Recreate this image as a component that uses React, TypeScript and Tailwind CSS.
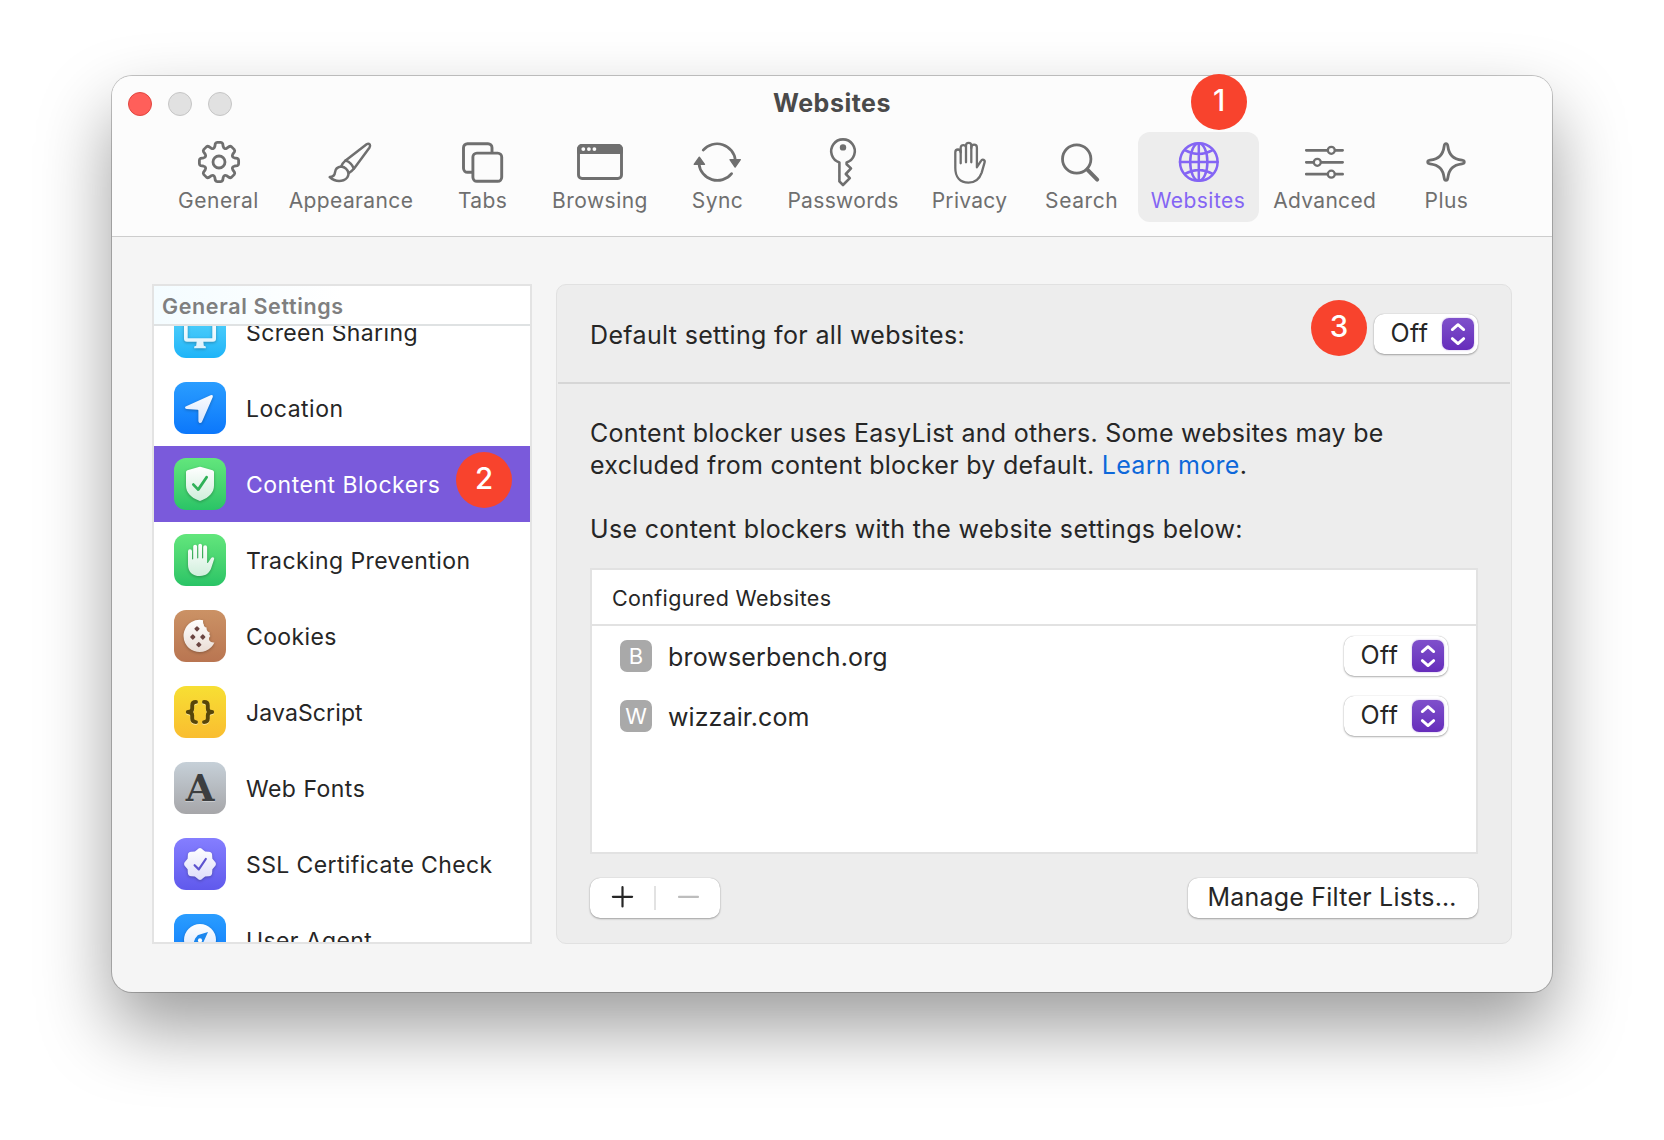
import React, { ReactNode } from "react";

const gearPath = (() => {
  const p = (a: number, r: number) =>
    `${(24 + r * Math.sin(a)).toFixed(2)} ${(24 - r * Math.cos(a)).toFixed(2)}`;
  let d = "";
  for (let i = 0; i < 8; i++) {
    const a = (i * Math.PI) / 4;
    d += `${i ? "L" : "M"}${p(a - 0.27, 15.9)}L${p(a - 0.2, 18.6)}Q${p(a - 0.17, 19.7)} ${p(a - 0.09, 19.7)}L${p(a + 0.09, 19.7)}Q${p(a + 0.17, 19.7)} ${p(a + 0.2, 18.6)}L${p(a + 0.27, 15.9)}Q${p(a + Math.PI / 8, 13.4)} ${p(a + Math.PI / 4 - 0.27, 15.9)}`;
  }
  return d + "Z";
})();

const sealPath = (() => {
  const p = (a: number, r: number) =>
    `${(26 + r * Math.sin(a)).toFixed(2)} ${(26 - r * Math.cos(a)).toFixed(2)}`;
  let d = `M${p(-Math.PI / 8, 13.4)}`;
  for (let i = 0; i < 8; i++) {
    const a = (i * Math.PI) / 4;
    d += `L${p(a - 0.2, 14.6)}Q${p(a, 17.6)} ${p(a + 0.2, 14.6)}L${p(a + Math.PI / 8, 13.4)}`;
  }
  return d + "Z";
})();

function Glyph({ children, w = 2.8, box = "0 0 48 48" }: { children: ReactNode; w?: number; box?: string }) {
  return (
    <svg
      className="block size-12 overflow-visible"
      viewBox={box}
      fill="none"
      stroke="currentColor"
      strokeWidth={w}
      strokeLinecap="round"
      strokeLinejoin="round"
    >
      {children}
    </svg>
  );
}

const tools: { label: string; box: string; ls: string; icon: ReactNode }[] = [
  {
    label: "General",
    box: "w-[107px]",
    ls: "tracking-[0.5px]",
    icon: (
      <Glyph>
        <path d={gearPath} />
        <circle cx="24" cy="24" r="6" />
      </Glyph>
    ),
  },
  {
    label: "Appearance",
    box: "w-[154px]",
    ls: "tracking-[0.38px]",
    icon: (
      <Glyph w={2.5}>
        <path d="M18.6 22.4 L39.6 6.3 Q41.5 5 42.8 6.5 Q43.6 8 42.4 9.8 L27.3 30.2 Q25 33 21.6 35.3" />
        <path d="M18.6 22.4 Q15.5 25 14.2 28.6" />
        <path d="M18.8 22.6 Q24.6 24.5 26.8 30.6" />
        <path d="M14.2 28.6 Q20 29.5 21.6 35.3 Q21.3 40.6 16.5 42.3 Q9 44.8 2.7 39 Q7.6 38.6 8 34.3 Q8.6 29.2 14.2 28.6 Z" />
      </Glyph>
    ),
  },
  {
    label: "Tabs",
    box: "w-[105px]",
    ls: "tracking-[0.34px]",
    icon: (
      <Glyph w={2.9} box="0.7 0 48 48">
        <rect x="14.6" y="15.1" width="28.8" height="28.2" rx="4" />
        <path d="M13.5 34.3H9.2a4 4 0 0 1-4-4V9.7a4 4 0 0 1 4-4h20.5a4 4 0 0 1 4 4v4" />
      </Glyph>
    ),
  },
  {
    label: "Browsing",
    box: "w-[126px]",
    ls: "tracking-[0.47px]",
    icon: (
      <Glyph w={2.9}>
        <rect x="2.5" y="7.5" width="43" height="33" rx="3.6" />
        <path d="M2.5 14.6V11a3.5 3.5 0 0 1 3.5-3.5h36a3.5 3.5 0 0 1 3.5 3.5v3.6Z" fill="currentColor" />
        <g fill="#fcfcfc" stroke="none">
          <circle cx="7.3" cy="11.1" r="1.9" />
          <circle cx="12.9" cy="11.1" r="1.9" />
          <circle cx="18.4" cy="11.1" r="1.9" />
        </g>
      </Glyph>
    ),
  },
  {
    label: "Sync",
    box: "w-[105px]",
    ls: "tracking-[0.5px]",
    icon: (
      <Glyph w={2.7} box="0.6 0 48 48">
        <path d="M9.8 12.1A18.4 18.4 0 0 1 42 22.5" />
        <path d="M5.6 25.8A18.4 18.4 0 0 0 38.2 35.6" />
        <path d="M36.6 21.7H46.9L41.7 29Z M0.8 26.3H11.1L5.9 19.2Z" fill="currentColor" strokeWidth="1.4" />
      </Glyph>
    ),
  },
  {
    label: "Passwords",
    box: "w-[142px]",
    ls: "tracking-[0.33px]",
    icon: (
      <Glyph w={2.6}>
        <path d="M20.4 24.4A11.8 11.8 0 1 1 27.6 24.4V26.2L32 30.4L26.8 36L30.8 40.2L24 47L20.4 43.4Z" />
        <circle cx="24" cy="9.4" r="3.2" fill="currentColor" stroke="none" />
      </Glyph>
    ),
  },
  {
    label: "Privacy",
    box: "w-[108px]",
    ls: "tracking-[0.3px] pr-[1px]",
    icon: (
      <Glyph w={2.3}>
        <path d="M14.7 25.3V14.2a2.7 2.7 0 0 0-5.4 0V30C9.3 39 14 44.6 22.5 44.6C30 44.6 33.6 40.6 35.7 34.6L38.6 24.4C39.3 22 36.4 20.5 35 22.8L30.9 29.2V9.4a2.8 2.8 0 0 0-5.6 0V24.3" />
        <path d="M14.7 14.5V9.4a2.7 2.7 0 0 1 5.3 0V24.3M20 9.5V7.6a2.65 2.65 0 0 1 5.3 0V10" />
      </Glyph>
    ),
  },
  {
    label: "Search",
    box: "w-[110px]",
    ls: "tracking-[0.6px] pl-[1.5px]",
    icon: (
      <Glyph w={2.8}>
        <circle cx="19.7" cy="21" r="14.2" />
        <path d="M30.4 31.6L40.2 41.6" strokeWidth="4" />
      </Glyph>
    ),
  },
  {
    label: "Websites",
    box: "w-[121px]",
    ls: "tracking-[0.46px] pr-[1px]",
    icon: (
      <Glyph w={2.5} box="0.7 0 48 48">
        <circle cx="24.5" cy="24" r="18.8" />
        <ellipse cx="24.5" cy="24" rx="8.6" ry="18.8" />
        <path d="M5.7 24H43.3M24.5 5.2V42.8M10.6 12.2Q24.5 20 38.4 12.2M10.6 35.8Q24.5 28 38.4 35.8" />
      </Glyph>
    ),
  },
  {
    label: "Advanced",
    box: "w-[128px]",
    ls: "tracking-[0.3px] pr-[0.6px]",
    icon: (
      <Glyph w={2.8} box="0.4 0 48 48">
        <path d="M5.7 12.3H42M5.7 24.3H42M5.7 36.2H42" />
        <g fill="#fcfcfc" strokeWidth="2.3">
          <circle cx="30.7" cy="12.3" r="3.5" />
          <circle cx="16.7" cy="24.3" r="3.5" />
          <circle cx="30.7" cy="36.2" r="3.5" />
        </g>
      </Glyph>
    ),
  },
  {
    label: "Plus",
    box: "w-[111px]",
    ls: "tracking-[0.45px]",
    icon: (
      <Glyph w={2.8} box="0.5 0 48 48">
        <path
          transform="translate(23.5 24)"
          d="M0-18.3C1.2-18.3 1.6-17.4 1.8-16C3-7 7-3 16-1.8C17.4-1.6 18.3-1.2 18.3 0S17.4 1.6 16 1.8C7 3 3 7 1.8 16C1.6 17.4 1.2 18.3 0 18.3S-1.6 17.4-1.8 16C-3 7-7 3-16 1.8C-17.4 1.6-18.3 1.2-18.3 0S-17.4-1.6-16-1.8C-7-3-3-7-1.8-16C-1.6-17.4-1.2-18.3 0-18.3Z"
        />
      </Glyph>
    ),
  },
];

function Badge({ n, className }: { n: number; className: string }) {
  return (
    <span
      className={`absolute z-10 flex size-14 items-center justify-center rounded-full bg-[#f8432d] pb-[2px] text-[29.5px] font-medium leading-none text-white ${className}`}
    >
      {n}
    </span>
  );
}

function Tile({ id, from, to, bg, children }: { id: string; from: string; to: string; bg: string; children: ReactNode }) {
  return (
    <span className={`flex size-[52px] shrink-0 overflow-hidden rounded-[12px] bg-linear-to-b ${bg}`}>
      <svg className="block size-[52px] drop-shadow-[0_1px_1.5px_rgba(0,0,0,0.28)]" viewBox="0 0 52 52" fill={`url(#${id})`}>
        <defs>
          <linearGradient id={id} gradientUnits="userSpaceOnUse" x1="0" y1="9" x2="0" y2="43">
            <stop offset="0" stopColor={from} />
            <stop offset="1" stopColor={to} />
          </linearGradient>
        </defs>
        {children}
      </svg>
    </span>
  );
}

const rows: { label: string; ls: string; selected?: boolean; icon: ReactNode }[] = [
  {
    label: "Screen Sharing",
    ls: "tracking-[0.38px]",
    icon: (
      <Tile id="g-screen" from="#ffffff" to="#dcf2fc" bg="from-[#5ad8fb] to-[#1cb4f8]">
        <path fillRule="evenodd" d="M13 11H39a3 3 0 0 1 3 3V32.7a3 3 0 0 1-3 3H13a3 3 0 0 1-3-3V14a3 3 0 0 1 3-3ZM13.7 14.6V32.2H38.3V14.6Z" />
        <path d="M22.7 35H29.3L29.8 39.8L31.8 40.6V42.3H20.2V40.6L22.2 39.8Z" />
      </Tile>
    ),
  },
  {
    label: "Location",
    ls: "tracking-[0.5px]",
    icon: (
      <Tile id="g-loc" from="#ffffff" to="#d3e3fd" bg="from-[#2a9dff] to-[#0c77fb]">
        <path d="M36.6 13.2Q39.4 12.4 38.7 15.2L27.9 40Q26.9 41.7 25.2 40.8Q24.5 40.2 24.4 39V28.6Q24.4 27.9 23.6 27.8L12.6 27.1Q11 26.8 11 25.6Q11 24.7 12.2 24.2Z" />
      </Tile>
    ),
  },
  {
    label: "Content Blockers",
    ls: "tracking-[0.5px]",
    selected: true,
    icon: (
      <Tile id="g-shield" from="#ffffff" to="#cfeedb" bg="from-[#62e67c] to-[#29c466]">
        <path d="M24.8 9Q26 8.4 27.2 9L38.6 12.2Q40 12.7 40 14V27.5C40 34.5 35 39.5 27.2 42.6Q26 43.2 24.8 42.6C17 39.5 12 34.5 12 27.5V14Q12 12.7 13.4 12.2Z" />
        <path d="M19.4 26.6L24.2 31.6L32.6 19.2" fill="none" stroke="#2fb158" strokeWidth="2.8" strokeLinecap="round" strokeLinejoin="round" />
      </Tile>
    ),
  },
  {
    label: "Tracking Prevention",
    ls: "tracking-[0.42px]",
    icon: (
      <Tile id="g-hand" from="#ffffff" to="#cfeedb" bg="from-[#62e67c] to-[#29c466]">
        <path d="M14 17.2a2 2 0 0 1 4 0V24.8a.6.6 0 0 0 1.2 0V12.6a1.95 1.95 0 0 1 3.9 0V23.8a.6.6 0 0 0 1.2 0V11.6a1.85 1.85 0 0 1 3.7 0V23.8a.6.6 0 0 0 1.2 0V13.2a1.95 1.95 0 0 1 3.9 0V28.6Q33.4 29.6 34.2 28.6L37 24.2Q38.2 22.6 39.6 23.4Q40.6 24 40 25.6L37.4 33.6C35.6 39 32 42 26 42C18 42 14 37.4 14 30.4Z" />
      </Tile>
    ),
  },
  {
    label: "Cookies",
    ls: "tracking-[0.38px]",
    icon: (
      <Tile id="g-cookie" from="#ffffff" to="#e9dcd4" bg="from-[#cb9265] to-[#b97551]">
        <path d="M29.2 10.2A16.1 16.1 0 1 0 40.4 32.4Q36.8 32.8 35.4 30.4Q34.2 28 36.4 26Q34.4 24.6 36 22.8Q32.2 21.4 32.6 17.6Q29.8 17 29.8 14.4Q28.6 12.4 29.2 10.2Z" />
        <g fill="#6b4542" stroke="#6b4542" strokeWidth="1.4" strokeLinejoin="round">
          <path d="M23 16.9l1.9 1.9l-1.9 1.9l-1.9-1.9z" />
          <path d="M18.8 25.1l1.9 1.9l-1.9 1.9l-1.9-1.9z" />
          <path d="M28.8 25.1l1.9 1.9l-1.9 1.9l-1.9-1.9z" />
          <path d="M24.8 32.8l1.9 1.9l-1.9 1.9l-1.9-1.9z" />
        </g>
      </Tile>
    ),
  },
  {
    label: "JavaScript",
    ls: "tracking-[0.12px]",
    icon: (
      <span className="flex size-[52px] shrink-0 rounded-[12px] bg-linear-to-b from-[#f7df33] to-[#f9bd30]">
        <svg className="block size-[52px] drop-shadow-[0_1px_0_rgba(255,255,255,0.5)]" viewBox="0 0 52 52" fill="none" stroke="#584609" strokeWidth="3.9" strokeLinecap="round" strokeLinejoin="round">
          <path d="M22 15.9Q18.2 15.9 18.2 19.4V22.4Q18.2 26 13.8 26Q18.2 26 18.2 29.6V32.6Q18.2 36.1 22 36.1" />
          <path d="M30 15.9Q33.8 15.9 33.8 19.4V22.4Q33.8 26 38.2 26Q33.8 26 33.8 29.6V32.6Q33.8 36.1 30 36.1" />
        </svg>
      </span>
    ),
  },
  {
    label: "Web Fonts",
    ls: "tracking-[0.48px]",
    icon: (
      <span className="flex size-[52px] shrink-0 items-center justify-center rounded-[12px] bg-linear-to-b from-[#c6d0d8] to-[#a6a6a9] font-['DejaVu_Serif'] text-[37px] leading-none font-bold text-[#3c3e40] [text-shadow:0_1px_0_rgba(255,255,255,0.35)]">
        A
      </span>
    ),
  },
  {
    label: "SSL Certificate Check",
    ls: "tracking-[0.39px]",
    icon: (
      <Tile id="g-ssl" from="#ffffff" to="#dddcfa" bg="from-[#857eff] to-[#6059ec]">
        <path d={sealPath} />
        <path d="M20.6 27.2L24.8 31.4L31.8 21" fill="none" stroke="#5d53cf" strokeWidth="2.2" strokeLinecap="round" strokeLinejoin="round" />
      </Tile>
    ),
  },
  {
    label: "User Agent",
    ls: "tracking-[0.38px]",
    icon: (
      <Tile id="g-ua" from="#ffffff" to="#d3e3fd" bg="from-[#2a9dff] to-[#0c77fb]">
        <circle cx="26" cy="26" r="16" />
        <path d="M34 18L28.8 29.4Q28.2 31 26.6 31.8L18 34L20.4 26.4Q21 24 22.8 22.4Q23.6 21.2 25 20.8Z" fill="#1a86ee" />
        <circle cx="26" cy="26.4" r="2.1" fill="#ffffff" />
      </Tile>
    ),
  },
];

function Select() {
  return (
    <div className="flex h-10 w-[104px] shrink-0 items-center justify-between rounded-[10px] bg-white pr-1 pl-[16.5px] shadow-[0_0_1px_rgba(0,0,0,0.3),0_1px_2px_rgba(0,0,0,0.3)]">
      <span className="pb-[2px] tracking-[0.4px]">Off</span>
      <svg
        className="block size-8 rounded-[7px] bg-linear-to-b from-[#7f50cb] to-[#662cbb] shadow-[0_0_2px_rgba(102,44,187,0.45)]"
        viewBox="0 0 32 32"
        fill="none"
        stroke="#fff"
        strokeWidth="2.8"
        strokeLinecap="round"
        strokeLinejoin="round"
      >
        <path d="M10.3 11.6L16 6.6L21.7 11.6M10.3 20.6L16 25.6L21.7 20.6" />
      </svg>
    </div>
  );
}

function Site({ letter, name, ls }: { letter: string; name: string; ls: string }) {
  return (
    <div className="flex h-[60px] items-center pr-7 pl-7">
      <span className="flex size-8 items-center justify-center rounded-[7px] bg-[#a9a9a9] text-[22px] leading-none text-white">
        {letter}
      </span>
      <span className={`flex-1 pt-[2px] pl-4 ${ls}`}>{name}</span>
      <Select />
    </div>
  );
}

export default function App() {
  return (
    <div className="h-[1140px] w-[1664px] overflow-hidden bg-white px-28 pt-[76px] font-['Inter',sans-serif] text-[25px] leading-8 text-[#262626]">
      <div className="flex h-[916px] w-[1440px] flex-col rounded-[20px] bg-[#f5f5f5] shadow-[0_0_0_1px_rgba(0,0,0,0.22),0_36px_72px_rgba(0,0,0,0.39)]">
        <header className="h-[161px] rounded-t-[20px] border-b border-[#cdcdcd] bg-[#fcfcfc]">
          <div className="flex h-14 items-center px-4">
            <div className="flex flex-1 gap-4">
              <span className="size-6 rounded-full border border-[#e2463f] bg-[#ff5f5a]" />
              <span className="size-6 rounded-full border border-[#c6c6c6] bg-[#e1e1e1]" />
              <span className="size-6 rounded-full border border-[#c6c6c6] bg-[#e1e1e1]" />
            </div>
            <h1 className="pb-[2px] font-bold tracking-[0.5px] text-[#4a4a4a]">Websites</h1>
            <div className="flex-1" />
          </div>
          <nav className="flex gap-[2px] pl-[53px] text-[21px] leading-7 text-[#6f6f6f]">
            {tools.map((t) => (
              <div
                key={t.label}
                className={`relative flex h-[90px] shrink-0 flex-col items-center rounded-[12px] pt-1.5 ${t.box} ${
                  t.label === "Websites" ? "bg-[#ededed] text-[#8465f4]" : ""
                }`}
              >
                {t.icon}
                <span className={`whitespace-nowrap pt-px ${t.ls}`}>{t.label}</span>
                {t.label === "Websites" && <Badge n={1} className="-top-[58px] left-[53px]" />}
              </div>
            ))}
          </nav>
        </header>

        <main className="flex gap-6 px-10 pt-[47px]">
          <aside className="flex h-[660px] w-[380px] shrink-0 flex-col overflow-hidden border-2 border-[#e3e3e3] bg-white">
            <div className="h-10 shrink-0 border-b-2 border-[#dfe2e3] bg-linear-to-r from-[#f4fcff] to-white to-50% pl-2 text-[21.5px] leading-[40px] font-semibold tracking-[0.63px] text-[#7f7f7f]">
              General Settings
            </div>
            <div className="min-h-0 flex-1 overflow-hidden">
              <ul className="-mt-8 text-[23px]">
                {rows.map((r) => (
                  <li
                    key={r.label}
                    className={`relative flex h-[76px] items-center gap-5 pl-5 ${r.selected ? "bg-[#7a5adb] text-white" : ""}`}
                  >
                    {r.icon}
                    <span className={`whitespace-nowrap pt-px ${r.ls}`}>{r.label}</span>
                    {r.selected && <Badge n={2} className="top-[6px] left-[302px]" />}
                  </li>
                ))}
              </ul>
            </div>
          </aside>

          <section className="h-[660px] w-[956px] rounded-[10px] border border-[#e1e1e1] bg-[#ededed]">
            <div className="relative mx-px flex h-[99px] items-center justify-between border-b-2 border-[#d6d6d6] pr-8 pl-8">
              <span className="pt-[3px] tracking-[0.34px]">Default setting for all websites:</span>
              <Select />
              <Badge n={3} className="top-[15px] right-[143px]" />
            </div>
            <div className="pt-[32px] pr-[33px] pl-[33px]">
              <p className="whitespace-nowrap pt-px tracking-[0.275px]">
                Content blocker uses EasyList and others. Some websites may be
                <br />
                excluded from content blocker by default. <a className="text-[#0d68da]">Learn more</a>.
              </p>
              <p className="mt-8 tracking-[0.32px]">Use content blockers with the website settings below:</p>
              <div className="mt-[23px] h-[286px] border-2 border-[#e2e2e2] bg-white">
                <div className="h-14 border-b-2 border-[#e2e2e2] pl-[20px] text-[21.5px] leading-[56px] tracking-[0.34px]">
                  Configured Websites
                </div>
                <Site letter="B" name="browserbench.org" ls="tracking-[0.17px]" />
                <Site letter="W" name="wizzair.com" ls="tracking-[0.1px]" />
              </div>
              <div className="mt-6 flex justify-between">
                <div className="flex h-10 w-[130px] items-center rounded-[10px] bg-white shadow-[0_0_1px_rgba(0,0,0,0.3),0_1px_2px_rgba(0,0,0,0.3)]">
                  <span className="flex flex-1 justify-center">
                    <svg className="block size-6" viewBox="0 0 24 24" stroke="#262626" strokeWidth="2.2" strokeLinecap="round">
                      <path d="M2.9 10.8H22.1M12.5 1.2V20.4" />
                    </svg>
                  </span>
                  <span className="h-6 w-[2px] bg-[#e2e2e2]" />
                  <span className="flex flex-1 justify-center">
                    <svg className="block size-6" viewBox="0 0 24 24" stroke="#bdbdbd" strokeWidth="2.1" strokeLinecap="round">
                      <path d="M3 10.9H22" />
                    </svg>
                  </span>
                </div>
                <div className="flex h-10 w-[290px] items-center justify-center rounded-[10px] bg-white pr-[2px] pb-[2px] tracking-[0.22px] shadow-[0_0_1px_rgba(0,0,0,0.3),0_1px_2px_rgba(0,0,0,0.3)]">
                  Manage Filter Lists…
                </div>
              </div>
            </div>
          </section>
        </main>
      </div>
    </div>
  );
}
